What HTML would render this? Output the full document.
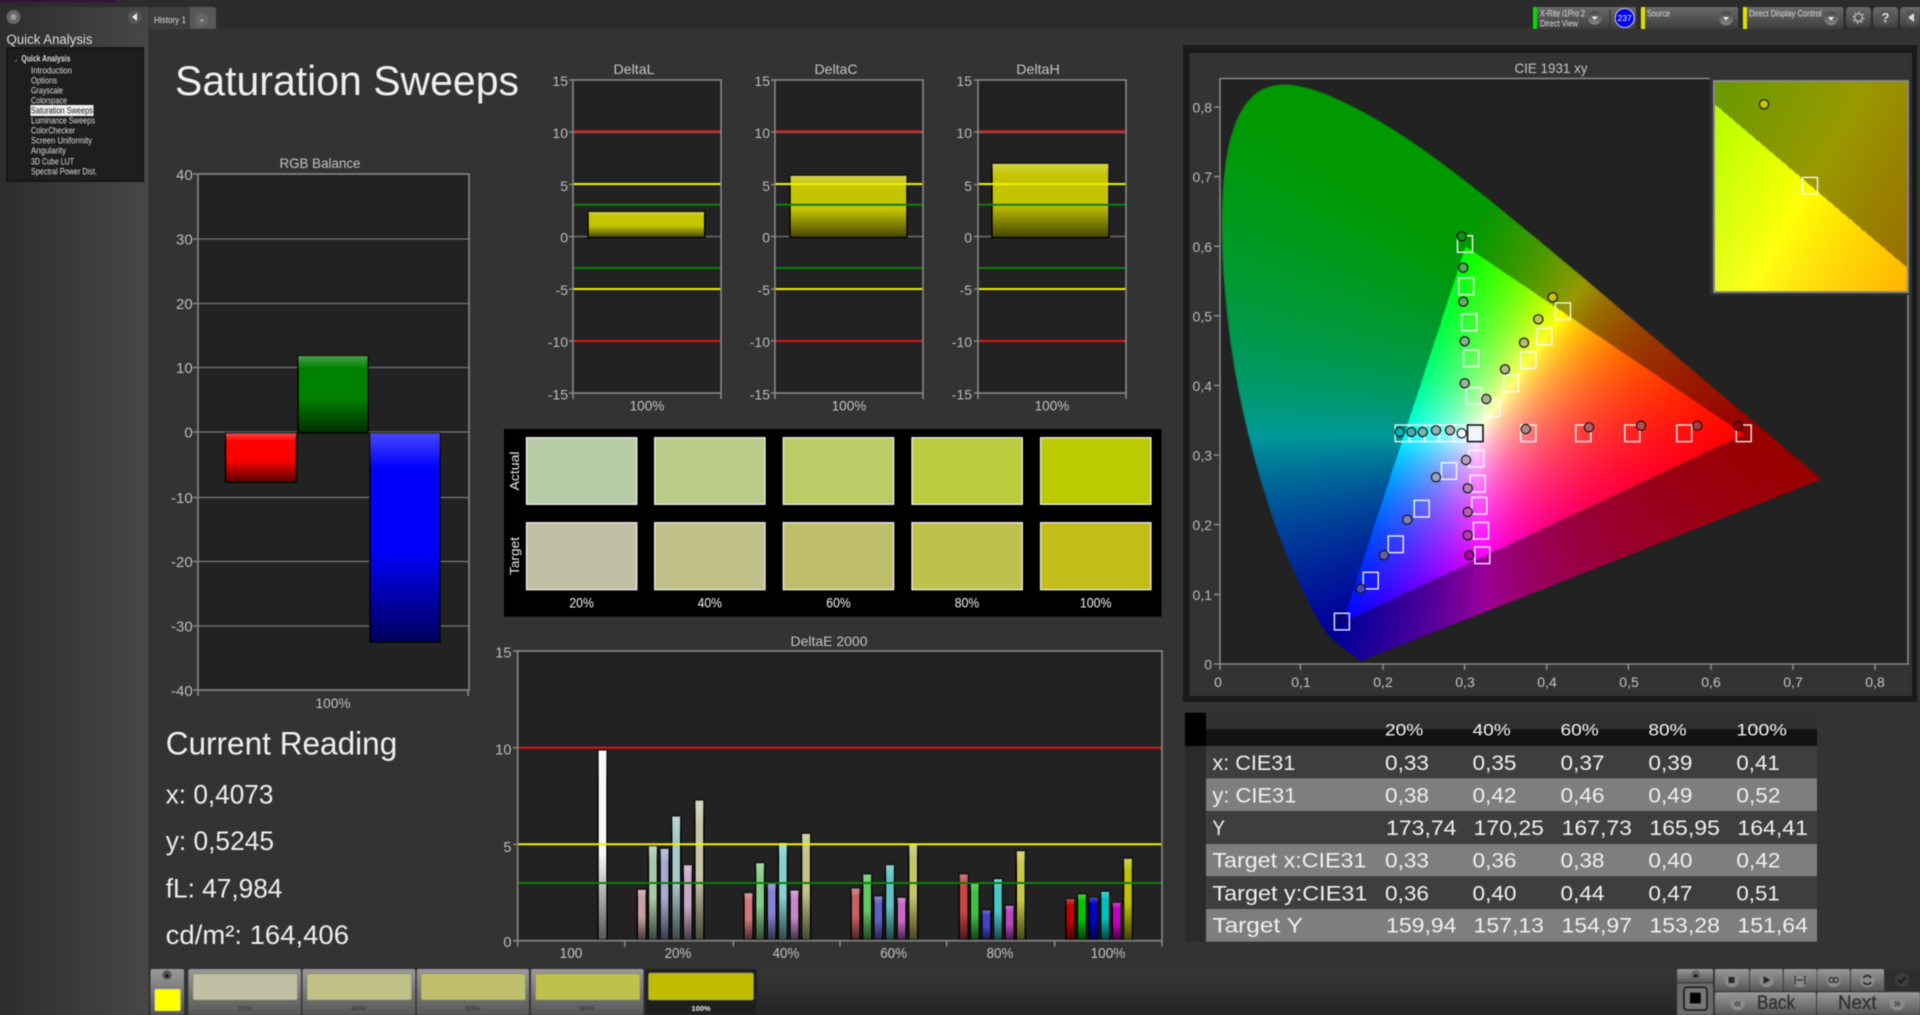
<!DOCTYPE html>
<html lang="en"><head><meta charset="utf-8"><title>Saturation Sweeps</title>
<style>
html,body{margin:0;padding:0;background:#333;width:1920px;height:1015px;overflow:hidden}
#wrap{position:absolute;left:0;top:0;width:1920px;height:1015px;filter:blur(.4px)}
svg,canvas{position:absolute;display:block}
text{font-family:"Liberation Sans",sans-serif}
.l{font-size:14px;fill:#bbb;text-anchor:end}
.c{font-size:14px;fill:#c4c4c4;text-anchor:middle}
.t{font-size:9.5px;fill:#ddd}
.v{font-size:21px;fill:#f0f0f0}
.h{font-size:16.5px;fill:#f4f4f4}
.r{font-size:26.5px;fill:#eee}
.s{font-size:14px;fill:#f4f4f4;text-anchor:middle}
.b{font-size:7.5px;fill:#333;text-anchor:middle}
.g{stroke:#777;stroke-width:1.2}
.a{stroke:#888;stroke-width:1.6;fill:none}
.re{stroke:#e01818;stroke-width:2}
.ye{stroke:#f0f000;stroke-width:2}
.gr{stroke:#0a800a;stroke-width:2}
.k{stroke:#000;stroke-width:1.4}
.o{fill:url(#ov)}
.w{fill:#eee;stroke:none}
.q{fill:none;stroke:#fff;stroke-width:1.4;stroke-opacity:.92}
.p{stroke:#111;stroke-width:1.2}
</style></head><body>
<div id="wrap">
<svg width="1920" height="1015" viewBox="0 0 1920 1015" style="left:0;top:0">
<defs>
<linearGradient id="side" x1="0" x2="1" y1="0" y2="0"><stop offset="0" stop-color="#2d2d2d"/><stop offset="1" stop-color="#474747"/></linearGradient>
<linearGradient id="btn" x1="0" x2="0" y1="0" y2="1"><stop offset="0" stop-color="#6a6a6a"/><stop offset="1" stop-color="#3e3e3e"/></linearGradient>
<linearGradient id="btn2" x1="0" x2="0" y1="0" y2="1"><stop offset="0" stop-color="#9a9a9a"/><stop offset="1" stop-color="#565656"/></linearGradient>
<linearGradient id="dark" x1="0" x2="0" y1="0" y2="1"><stop offset="0" stop-color="#444"/><stop offset="1" stop-color="#888"/></linearGradient>
<linearGradient id="strip" x1="0" x2="0" y1="0" y2="1"><stop offset="0" stop-color="#363636"/><stop offset="1" stop-color="#262626"/></linearGradient>
<linearGradient id="ov" x1="0" x2="0" y1="0" y2="1"><stop offset="0" stop-color="#fff" stop-opacity=".28"/><stop offset=".17" stop-color="#fff" stop-opacity="0"/><stop offset=".55" stop-color="#000" stop-opacity="0"/><stop offset="1" stop-color="#000" stop-opacity=".65"/></linearGradient>
</defs>

<rect width="1920" height="1015" fill="#333"/>
<rect width="1920" height="29" fill="#2c2c2c"/>
<rect x="0" y="7" width="149" height="1008" fill="url(#side)"/>
<rect x="0" y="0" width="117" height="2" fill="#3a0a40"/>
<rect x="148.5" y="7" width="1" height="1008" fill="#2e2e2e"/>

<!-- sidebar -->
<circle cx="13.5" cy="17" r="7" fill="#666"/><circle cx="13.5" cy="17" r="3" fill="#999"/>
<circle cx="135" cy="17" r="7" fill="#555"/><polygon points="132,17 137,13 137,21" fill="#eee"/>
<text x="6.5" y="44" font-size="13.5" fill="#ddd" textLength="86" lengthAdjust="spacingAndGlyphs">Quick Analysis</text>
<rect x="7" y="48" width="136" height="133" fill="#1e1e1e" stroke="#161616" stroke-width="2"/>
<polygon points="14,62 17,59 17,62" fill="#555"/>
<text class="t" x="21.4" y="61.5" font-weight="bold" fill="#eee" textLength="49" lengthAdjust="spacingAndGlyphs">Quick Analysis</text>
<text class="t" x="31" y="73.5" textLength="41" lengthAdjust="spacingAndGlyphs">Introduction</text>
<text class="t" x="31" y="83.5" textLength="26" lengthAdjust="spacingAndGlyphs">Options</text>
<text class="t" x="31" y="93.5" textLength="32" lengthAdjust="spacingAndGlyphs">Grayscale</text>
<text class="t" x="31" y="103.5" textLength="36" lengthAdjust="spacingAndGlyphs">Colorspace</text>
<rect x="30.5" y="105" width="63" height="11" fill="#eee"/>
<text class="t" x="31" y="113.5" style="fill:#222" textLength="62" lengthAdjust="spacingAndGlyphs">Saturation Sweeps</text>
<text class="t" x="31" y="123.5" textLength="64" lengthAdjust="spacingAndGlyphs">Luminance Sweeps</text>
<text class="t" x="31" y="133.5" textLength="44" lengthAdjust="spacingAndGlyphs">ColorChecker</text>
<text class="t" x="31" y="143.5" textLength="61" lengthAdjust="spacingAndGlyphs">Screen Uniformity</text>
<text class="t" x="31" y="153.5" textLength="35" lengthAdjust="spacingAndGlyphs">Angularity</text>
<text class="t" x="31" y="164.5" textLength="43" lengthAdjust="spacingAndGlyphs">3D Cube LUT</text>
<text class="t" x="31" y="174.5" textLength="66" lengthAdjust="spacingAndGlyphs">Spectral Power Dist.</text>

<!-- tabs -->
<path d="M149 29V10q0-3 3-3h38v22z" fill="#3e3e3e"/>
<path d="M190 7h23q3 0 3 3v19h-26z" fill="#585858"/>
<circle cx="202" cy="20" r="6.5" fill="#666"/>
<text x="202" y="23" font-size="8" fill="#ccc" text-anchor="middle">+</text>
<text x="154" y="23" font-size="9.5" fill="#ddd" textLength="32" lengthAdjust="spacingAndGlyphs">History 1</text>

<!-- top right controls -->
<rect x="1533" y="7" width="103" height="22" rx="2" fill="url(#btn)"/><rect x="1533" y="7" width="4" height="22" fill="#00dd00"/>
<line x1="1610" y1="9" x2="1610" y2="29" stroke="#333"/>
<text class="t" x="1540" y="16.5" textLength="45" lengthAdjust="spacingAndGlyphs">X-Rite i1Pro 2</text>
<text class="t" x="1540" y="26.5" textLength="38" lengthAdjust="spacingAndGlyphs">Direct View</text>
<circle cx="1594.7" cy="17.7" r="7" fill="url(#dark)"/><polygon points="1591.5,16.5 1598,16.5 1594.7,20" fill="#eee"/>
<circle cx="1624.7" cy="18" r="9.5" fill="#0000ee" stroke="#ccd" stroke-width="1"/>
<text x="1624.7" y="21" font-size="8.5" fill="#eef" text-anchor="middle">237</text>
<rect x="1640.7" y="7" width="97.3" height="22" rx="2" fill="url(#btn)"/><rect x="1641" y="7" width="4" height="22" fill="#e0e000"/>
<text class="t" x="1647" y="16.5" textLength="23" lengthAdjust="spacingAndGlyphs">Source</text>
<circle cx="1726" cy="18.3" r="7" fill="url(#dark)"/><polygon points="1722.8,17 1729.2,17 1726,20.5" fill="#eee"/>
<rect x="1742.7" y="7" width="100.6" height="22" rx="2" fill="url(#btn)"/><rect x="1743" y="7" width="4" height="22" fill="#e0e000"/>
<text class="t" x="1749" y="16.5" textLength="72.7" lengthAdjust="spacingAndGlyphs">Direct Display Control</text>
<circle cx="1831" cy="18.3" r="7" fill="url(#dark)"/><polygon points="1827.8,17 1834.2,17 1831,20.5" fill="#eee"/>
<rect x="1846" y="7" width="25" height="21" rx="4" fill="url(#btn)"/>
<circle cx="1858.5" cy="17.5" r="7.5" fill="#555"/><circle cx="1858.5" cy="17.5" r="3.8" fill="none" stroke="#aaa" stroke-width="1.6"/><circle cx="1858.5" cy="17.5" r="5.4" fill="none" stroke="#aaa" stroke-width="1.4" stroke-dasharray="2 2.2"/>
<rect x="1873" y="7" width="25" height="21" rx="4" fill="url(#btn)"/>
<circle cx="1885.5" cy="17.5" r="7.5" fill="#555"/><text x="1885.5" y="22" font-size="13" font-weight="bold" fill="#ddd" text-anchor="middle">?</text>
<rect x="1900" y="7" width="24" height="21" rx="4" fill="url(#btn)"/>
<circle cx="1912" cy="17.5" r="7.5" fill="#555"/><polygon points="1908,17.5 1914,13 1914,22" fill="#ddd"/>

<!-- title -->
<text x="175" y="95" font-size="42" fill="#eee" textLength="344" lengthAdjust="spacingAndGlyphs">Saturation Sweeps</text>

<!-- RGB balance -->
<text class="c" x="320" y="168" textLength="81" lengthAdjust="spacingAndGlyphs">RGB Balance</text>
<rect x="198" y="174" width="271" height="516" fill="#222"/>
<g class="g"><line x1="198" x2="469" y1="239" y2="239"/><line x1="198" x2="469" y1="303.5" y2="303.5"/><line x1="198" x2="469" y1="367.5" y2="367.5"/><line x1="198" x2="469" y1="432" y2="432"/><line x1="198" x2="469" y1="497.5" y2="497.5"/><line x1="198" x2="469" y1="561.5" y2="561.5"/><line x1="198" x2="469" y1="626" y2="626"/></g>
<rect class="a" x="198" y="174" width="271" height="516"/>
<path class="a" d="M193 174h5M193 239h5M193 303.5h5M193 367.5h5M193 432h5M193 497.5h5M193 561.5h5M193 626h5M193 690h5M198 690v6M468 690v6"/>
<g class="l" style="font-size:15px"><text x="192.7" y="180">40</text><text x="192.7" y="244.5">30</text><text x="192.7" y="309">20</text><text x="192.7" y="373">10</text><text x="192.7" y="437.5">0</text><text x="192.7" y="503">-10</text><text x="192.7" y="567">-20</text><text x="192.7" y="631.5">-30</text><text x="192.7" y="696">-40</text></g>
<rect class="k" x="225.5" y="433" width="71" height="49" fill="#f00"/><rect class="o" x="225.5" y="433" width="71" height="49"/>
<rect class="k" x="298" y="355.7" width="70" height="77.3" fill="#008000"/><rect class="o" x="298" y="355.7" width="70" height="77.3"/>
<rect class="k" x="370" y="433" width="70" height="209" fill="#0000ff"/><rect class="o" x="370" y="433" width="70" height="209"/>
<text class="c" x="333" y="708" textLength="35" lengthAdjust="spacingAndGlyphs">100%</text>

<!-- Delta charts -->
<text class="c" x="634" y="74" textLength="41" lengthAdjust="spacingAndGlyphs">DeltaL</text>
<text class="c" x="836" y="74" textLength="43" lengthAdjust="spacingAndGlyphs">DeltaC</text>
<text class="c" x="1038" y="74" textLength="43.4" lengthAdjust="spacingAndGlyphs">DeltaH</text>
<g fill="#222"><rect x="573" y="80" width="148" height="313"/><rect x="775" y="80" width="148" height="313"/><rect x="978" y="80" width="148" height="313"/></g>
<g class="g"><path d="M573 132.5h148M573 184.5h148M573 236.5h148M573 289h148M573 341h148M775 132.5h148M775 184.5h148M775 236.5h148M775 289h148M775 341h148M978 132.5h148M978 184.5h148M978 236.5h148M978 289h148M978 341h148" fill="none"/></g>
<rect class="k" x="588" y="211.5" width="116.7" height="26" fill="#c4c400"/><rect class="o" x="588" y="211.5" width="116.7" height="26"/>
<rect class="k" x="790" y="175.3" width="117" height="62.2" fill="#c4c400"/><rect class="o" x="790" y="175.3" width="117" height="62.2"/>
<rect class="k" x="992" y="163.3" width="117" height="74.2" fill="#c4c400"/><rect class="o" x="992" y="163.3" width="117" height="74.2"/>
<path class="re" d="M573 131.3h148M775 131.3h148M978 131.3h148M573 341h148M775 341h148M978 341h148"/>
<path class="ye" d="M573 184h148M775 184h148M978 184h148M573 289h148M775 289h148M978 289h148"/>
<path class="gr" d="M573 204.7h148M775 204.7h148M978 204.7h148M573 268h148M775 268h148M978 268h148"/>
<g class="a"><rect x="573" y="80" width="148" height="313"/><rect x="775" y="80" width="148" height="313"/><rect x="978" y="80" width="148" height="313"/>
<path d="M569 80h4M569 132h4M569 184.5h4M569 236.5h4M569 289h4M569 341h4M569 393h4M573 393v6M721 393v6M771 80h4M771 132h4M771 184.5h4M771 236.5h4M771 289h4M771 341h4M771 393h4M775 393v6M923 393v6M974 80h4M974 132h4M974 184.5h4M974 236.5h4M974 289h4M974 341h4M974 393h4M978 393v6M1126 393v6"/></g>
<g class="l"><text x="568" y="86">15</text><text x="568" y="138">10</text><text x="568" y="191">5</text><text x="568" y="242.5">0</text><text x="568" y="295">-5</text><text x="568" y="347">-10</text><text x="568" y="399.5">-15</text>
<text x="770" y="86">15</text><text x="770" y="138">10</text><text x="770" y="191">5</text><text x="770" y="242.5">0</text><text x="770" y="295">-5</text><text x="770" y="347">-10</text><text x="770" y="399.5">-15</text>
<text x="972" y="86">15</text><text x="972" y="138">10</text><text x="972" y="191">5</text><text x="972" y="242.5">0</text><text x="972" y="295">-5</text><text x="972" y="347">-10</text><text x="972" y="399.5">-15</text></g>
<text class="c" x="647" y="410.5" textLength="34.7" lengthAdjust="spacingAndGlyphs">100%</text>
<text class="c" x="849" y="410.5" textLength="34.7" lengthAdjust="spacingAndGlyphs">100%</text>
<text class="c" x="1052" y="410.5" textLength="34.7" lengthAdjust="spacingAndGlyphs">100%</text>

<!-- swatch panel -->
<rect x="504" y="429" width="657.5" height="187.7" fill="#000"/>
<g stroke="#eee" stroke-width="1.3">
<rect x="526.5" y="437.7" width="110.3" height="66.6" fill="#b9cca8"/><rect x="654.7" y="437.7" width="110.3" height="66.6" fill="#bbcc88"/><rect x="783.3" y="437.7" width="110.3" height="66.6" fill="#bbcc66"/><rect x="912" y="437.7" width="110.3" height="66.6" fill="#bbcc3f"/><rect x="1040.6" y="437.7" width="110.3" height="66.6" fill="#bccb00"/>
<rect x="526.5" y="522.7" width="110.3" height="67" fill="#c0c0a4"/><rect x="654.7" y="522.7" width="110.3" height="67" fill="#c0c088"/><rect x="783.3" y="522.7" width="110.3" height="67" fill="#bfbf6b"/><rect x="912" y="522.7" width="110.3" height="67" fill="#c0c04c"/><rect x="1040.6" y="522.7" width="110.3" height="67" fill="#c3bd1a"/></g>
<text transform="translate(519,471) rotate(-90)" font-size="13" fill="#eee" text-anchor="middle" textLength="39" lengthAdjust="spacingAndGlyphs">Actual</text>
<text transform="translate(519,556) rotate(-90)" font-size="13" fill="#eee" text-anchor="middle" textLength="38" lengthAdjust="spacingAndGlyphs">Target</text>
<text class="s" x="581.6" y="607.5" textLength="24.4" lengthAdjust="spacingAndGlyphs">20%</text><text class="s" x="709.8" y="607.5" textLength="24.4" lengthAdjust="spacingAndGlyphs">40%</text><text class="s" x="838.5" y="607.5" textLength="24.4" lengthAdjust="spacingAndGlyphs">60%</text><text class="s" x="967" y="607.5" textLength="24.4" lengthAdjust="spacingAndGlyphs">80%</text><text class="s" x="1095.7" y="607.5" textLength="31.6" lengthAdjust="spacingAndGlyphs">100%</text>

<!-- DeltaE -->
<text class="c" x="829" y="646" textLength="77" lengthAdjust="spacingAndGlyphs">DeltaE 2000</text>
<rect x="517.7" y="651" width="644.3" height="289.7" fill="#222"/>
<g class="k">
<rect x="598" y="750" width="9" height="190" fill="#f8f8f8"/>
<rect x="637.3" y="889.3" width="9" height="50.7" fill="#c8a0a0"/><rect x="648.4" y="845.7" width="9" height="94.3" fill="#a8c8a8"/><rect x="660.1" y="848.3" width="9" height="91.7" fill="#a8a8d0"/><rect x="671.7" y="816" width="9" height="124" fill="#a8c8c8"/><rect x="683.3" y="864.7" width="9" height="75.3" fill="#c8a8c8"/><rect x="694.9" y="800" width="9" height="140" fill="#c8c8a8"/>
<rect x="744" y="892.7" width="9" height="47.3" fill="#d07878"/><rect x="755.6" y="862.7" width="9" height="77.3" fill="#88cc88"/><rect x="767.2" y="882" width="9" height="58" fill="#8484d0"/><rect x="778.4" y="842.3" width="9" height="97.7" fill="#88d0d0"/><rect x="790" y="890" width="9" height="50" fill="#c888c8"/><rect x="801.6" y="833.3" width="9" height="106.7" fill="#c4c488"/>
<rect x="851.1" y="888" width="9" height="52" fill="#c86060"/><rect x="862.7" y="874" width="9" height="66" fill="#60c860"/><rect x="873.9" y="896" width="9" height="44" fill="#6060c4"/><rect x="885.5" y="864.7" width="9" height="75.3" fill="#60c4c4"/><rect x="897.1" y="897.3" width="9" height="42.7" fill="#c868c8"/><rect x="908.7" y="842.7" width="9" height="97.3" fill="#c4c468"/>
<rect x="959.2" y="874" width="9" height="66" fill="#cc4444"/><rect x="970.3" y="882" width="9" height="58" fill="#40c040"/><rect x="981.9" y="910" width="9" height="30" fill="#4444c8"/><rect x="993.5" y="878.7" width="9" height="61.3" fill="#44c8c8"/><rect x="1005.1" y="905.3" width="9" height="34.7" fill="#c044c0"/><rect x="1016.3" y="850.7" width="9" height="89.3" fill="#c8c844"/>
<rect x="1065.9" y="898.7" width="9" height="41.3" fill="#c00000"/><rect x="1077.5" y="894" width="9" height="46" fill="#00c000"/><rect x="1089.1" y="897.3" width="9" height="42.7" fill="#0000c0"/><rect x="1100.7" y="891.3" width="9" height="48.7" fill="#00c0c0"/><rect x="1112.3" y="902.3" width="9" height="37.7" fill="#c000c0"/><rect x="1123.5" y="858.3" width="9" height="81.7" fill="#c0c000"/>
</g>
<g class="o">
<rect x="598" y="750" width="9" height="190"/>
<rect x="637.3" y="889.3" width="9" height="50.7"/><rect x="648.4" y="845.7" width="9" height="94.3"/><rect x="660.1" y="848.3" width="9" height="91.7"/><rect x="671.7" y="816" width="9" height="124"/><rect x="683.3" y="864.7" width="9" height="75.3"/><rect x="694.9" y="800" width="9" height="140"/>
<rect x="744" y="892.7" width="9" height="47.3"/><rect x="755.6" y="862.7" width="9" height="77.3"/><rect x="767.2" y="882" width="9" height="58"/><rect x="778.4" y="842.3" width="9" height="97.7"/><rect x="790" y="890" width="9" height="50"/><rect x="801.6" y="833.3" width="9" height="106.7"/>
<rect x="851.1" y="888" width="9" height="52"/><rect x="862.7" y="874" width="9" height="66"/><rect x="873.9" y="896" width="9" height="44"/><rect x="885.5" y="864.7" width="9" height="75.3"/><rect x="897.1" y="897.3" width="9" height="42.7"/><rect x="908.7" y="842.7" width="9" height="97.3"/>
<rect x="959.2" y="874" width="9" height="66"/><rect x="970.3" y="882" width="9" height="58"/><rect x="981.9" y="910" width="9" height="30"/><rect x="993.5" y="878.7" width="9" height="61.3"/><rect x="1005.1" y="905.3" width="9" height="34.7"/><rect x="1016.3" y="850.7" width="9" height="89.3"/>
<rect x="1065.9" y="898.7" width="9" height="41.3"/><rect x="1077.5" y="894" width="9" height="46"/><rect x="1089.1" y="897.3" width="9" height="42.7"/><rect x="1100.7" y="891.3" width="9" height="48.7"/><rect x="1112.3" y="902.3" width="9" height="37.7"/><rect x="1123.5" y="858.3" width="9" height="81.7"/>
</g>
<path class="re" d="M517.7 747.7H1162"/><path class="ye" d="M517.7 844.3H1162"/><path class="gr" d="M517.7 883H1162"/>
<rect class="a" x="517.7" y="651" width="644.3" height="289.7"/>
<path class="a" d="M513 651h5M513 747.7h5M513 844.3h5M513 940.7h5M517.7 940.7v6M624.8 940.7v6M733.3 940.7v6M840 940.7v6M946.7 940.7v6M1054.7 940.7v6M1162 940.7v6"/>
<g class="l" style="font-size:14.5px"><text x="511.4" y="657.5">15</text><text x="511.4" y="754.5">10</text><text x="511.4" y="852">5</text><text x="511.4" y="947">0</text></g>
<g class="c" style="font-size:14.5px"><text x="571" y="958" textLength="22.8" lengthAdjust="spacingAndGlyphs">100</text><text x="678" y="958" textLength="26.8" lengthAdjust="spacingAndGlyphs">20%</text><text x="786" y="958" textLength="26.8" lengthAdjust="spacingAndGlyphs">40%</text><text x="893.6" y="958" textLength="26.8" lengthAdjust="spacingAndGlyphs">60%</text><text x="1000" y="958" textLength="26.8" lengthAdjust="spacingAndGlyphs">80%</text><text x="1108" y="958" textLength="34.8" lengthAdjust="spacingAndGlyphs">100%</text></g>

<!-- current reading -->
<text x="165.7" y="754.3" font-size="32" fill="#eee" textLength="231.6" lengthAdjust="spacingAndGlyphs">Current Reading</text>
<text class="r" x="165.7" y="803.3" textLength="107.7" lengthAdjust="spacingAndGlyphs">x: 0,4073</text>
<text class="r" x="165.7" y="850" textLength="108.3" lengthAdjust="spacingAndGlyphs">y: 0,5245</text>
<text class="r" x="165.7" y="897.3" textLength="116.7" lengthAdjust="spacingAndGlyphs">fL: 47,984</text>
<text class="r" x="165.7" y="944" textLength="183.3" lengthAdjust="spacingAndGlyphs">cd/m²: 164,406</text>

<!-- CIE frame -->
<rect x="1183" y="45" width="734" height="657" fill="#1a1a1a"/>
<rect x="1189.4" y="53" width="722.6" height="643" fill="#333"/>
<text class="c" x="1551" y="73" textLength="73" lengthAdjust="spacingAndGlyphs">CIE 1931 xy</text>
<rect x="1220" y="78.5" width="688" height="585.5" fill="#222"/>
<path class="a" d="M1710 78.5H1220V664H1908V294M1214 107h6M1214 176.6h6M1214 246.2h6M1214 315.8h6M1214 385.4h6M1214 455h6M1214 524.6h6M1214 594.4h6M1214 664h6M1220 664v6M1300.3 664v6M1383 664v6M1464.6 664v6M1546.7 664v6M1628.3 664v6M1711 664v6M1793 664v6M1875 664v6"/>
<g class="l"><text x="1212" y="112.5">0,8</text><text x="1212" y="182">0,7</text><text x="1212" y="252">0,6</text><text x="1212" y="321.5">0,5</text><text x="1212" y="391">0,4</text><text x="1212" y="460.5">0,3</text><text x="1212" y="530">0,2</text><text x="1212" y="600">0,1</text><text x="1212" y="669.5">0</text></g>
<g class="c"><text x="1218" y="687">0</text><text x="1301" y="687">0,1</text><text x="1383" y="687">0,2</text><text x="1465" y="687">0,3</text><text x="1547" y="687">0,4</text><text x="1629" y="687">0,5</text><text x="1711" y="687">0,6</text><text x="1793" y="687">0,7</text><text x="1875" y="687">0,8</text></g>
<rect x="1710" y="78" width="202" height="217" fill="#333"/>

<!-- table -->
<rect x="1185" y="712.7" width="632" height="33.3" fill="#2f2f2f"/>
<rect x="1206" y="729.3" width="611" height="16.7" fill="#111"/>
<rect x="1185" y="712.7" width="21" height="33.3" fill="#000"/>
<rect x="1185" y="746" width="21" height="195.7" fill="#2a2a2a"/>
<rect x="1206" y="746" width="611" height="32.3" fill="#3e3e3e"/><rect x="1206" y="778.3" width="611" height="32.7" fill="#7e7e7e"/><rect x="1206" y="811" width="611" height="33" fill="#3e3e3e"/><rect x="1206" y="844" width="611" height="32.3" fill="#7e7e7e"/><rect x="1206" y="876.3" width="611" height="32.7" fill="#3e3e3e"/><rect x="1206" y="909" width="611" height="32.7" fill="#7e7e7e"/>
<g>
<text class="h" x="1385" y="735.7" textLength="38.3" lengthAdjust="spacingAndGlyphs">20%</text><text class="h" x="1472.5" y="735.7" textLength="38.3" lengthAdjust="spacingAndGlyphs">40%</text><text class="h" x="1560.5" y="735.7" textLength="38.3" lengthAdjust="spacingAndGlyphs">60%</text><text class="h" x="1648.4" y="735.7" textLength="38.3" lengthAdjust="spacingAndGlyphs">80%</text><text class="h" x="1736.4" y="735.7" textLength="50.5" lengthAdjust="spacingAndGlyphs">100%</text>
<text class="v" x="1212.4" y="770" textLength="83" lengthAdjust="spacingAndGlyphs">x: CIE31</text><text class="v" x="1385" y="770" textLength="44" lengthAdjust="spacingAndGlyphs">0,33</text><text class="v" x="1472.5" y="770" textLength="44" lengthAdjust="spacingAndGlyphs">0,35</text><text class="v" x="1560.5" y="770" textLength="44" lengthAdjust="spacingAndGlyphs">0,37</text><text class="v" x="1648.4" y="770" textLength="44" lengthAdjust="spacingAndGlyphs">0,39</text><text class="v" x="1736.4" y="770" textLength="43.3" lengthAdjust="spacingAndGlyphs">0,41</text>
<text class="v" x="1212.4" y="802.3" textLength="84" lengthAdjust="spacingAndGlyphs">y: CIE31</text><text class="v" x="1385" y="802.3" textLength="44" lengthAdjust="spacingAndGlyphs">0,38</text><text class="v" x="1472.5" y="802.3" textLength="44" lengthAdjust="spacingAndGlyphs">0,42</text><text class="v" x="1560.5" y="802.3" textLength="44" lengthAdjust="spacingAndGlyphs">0,46</text><text class="v" x="1648.4" y="802.3" textLength="44" lengthAdjust="spacingAndGlyphs">0,49</text><text class="v" x="1736.4" y="802.3" textLength="44" lengthAdjust="spacingAndGlyphs">0,52</text>
<text class="v" x="1212.4" y="835" textLength="12.6" lengthAdjust="spacingAndGlyphs">Y</text><text class="v" x="1386" y="835" textLength="70.5" lengthAdjust="spacingAndGlyphs">173,74</text><text class="v" x="1473.5" y="835" textLength="70.5" lengthAdjust="spacingAndGlyphs">170,25</text><text class="v" x="1561.5" y="835" textLength="70.5" lengthAdjust="spacingAndGlyphs">167,73</text><text class="v" x="1649.4" y="835" textLength="70.5" lengthAdjust="spacingAndGlyphs">165,95</text><text class="v" x="1737.4" y="835" textLength="70.5" lengthAdjust="spacingAndGlyphs">164,41</text>
<text class="v" x="1212.4" y="867.7" textLength="154" lengthAdjust="spacingAndGlyphs">Target x:CIE31</text><text class="v" x="1385" y="867.7" textLength="44" lengthAdjust="spacingAndGlyphs">0,33</text><text class="v" x="1472.5" y="867.7" textLength="44" lengthAdjust="spacingAndGlyphs">0,36</text><text class="v" x="1560.5" y="867.7" textLength="44" lengthAdjust="spacingAndGlyphs">0,38</text><text class="v" x="1648.4" y="867.7" textLength="44" lengthAdjust="spacingAndGlyphs">0,40</text><text class="v" x="1736.4" y="867.7" textLength="44" lengthAdjust="spacingAndGlyphs">0,42</text>
<text class="v" x="1212.4" y="900.3" textLength="155" lengthAdjust="spacingAndGlyphs">Target y:CIE31</text><text class="v" x="1385" y="900.3" textLength="44" lengthAdjust="spacingAndGlyphs">0,36</text><text class="v" x="1472.5" y="900.3" textLength="44" lengthAdjust="spacingAndGlyphs">0,40</text><text class="v" x="1560.5" y="900.3" textLength="44" lengthAdjust="spacingAndGlyphs">0,44</text><text class="v" x="1648.4" y="900.3" textLength="44" lengthAdjust="spacingAndGlyphs">0,47</text><text class="v" x="1736.4" y="900.3" textLength="43.3" lengthAdjust="spacingAndGlyphs">0,51</text>
<text class="v" x="1212.4" y="932.7" textLength="90.5" lengthAdjust="spacingAndGlyphs">Target Y</text><text class="v" x="1386" y="932.7" textLength="70.5" lengthAdjust="spacingAndGlyphs">159,94</text><text class="v" x="1473.5" y="932.7" textLength="70.5" lengthAdjust="spacingAndGlyphs">157,13</text><text class="v" x="1561.5" y="932.7" textLength="70.5" lengthAdjust="spacingAndGlyphs">154,97</text><text class="v" x="1649.4" y="932.7" textLength="70.5" lengthAdjust="spacingAndGlyphs">153,28</text><text class="v" x="1737.4" y="932.7" textLength="70.5" lengthAdjust="spacingAndGlyphs">151,64</text>
</g>

<!-- bottom strip -->
<rect x="757" y="969" width="920" height="46" fill="url(#strip)"/>
<rect x="150.5" y="969" width="33.5" height="46" rx="2" fill="url(#btn2)"/>
<circle cx="167" cy="975" r="4.6" fill="#555"/><polygon points="164.5,977 169.5,977 167,973.5" fill="#111"/>
<rect x="154.6" y="989" width="26" height="22" rx="2" fill="#ffff00" stroke="#aaa" stroke-width=".8"/>
<g fill="url(#btn2)"><rect x="188.3" y="969" width="112.7" height="46" rx="2"/><rect x="302.5" y="969" width="112.8" height="46" rx="2"/><rect x="416.8" y="969" width="112.2" height="46" rx="2"/><rect x="531" y="969" width="112.4" height="46" rx="2"/></g>
<rect x="645" y="969" width="112" height="46" fill="#1f1f1f" rx="2"/>
<g stroke="#8e8e70" stroke-width=".8"><rect x="193" y="973.7" width="104.5" height="26.3" rx="2" fill="#c0c0a4"/><rect x="307" y="973.7" width="104.5" height="26.3" rx="2" fill="#c0c088"/><rect x="421" y="973.7" width="104.5" height="26.3" rx="2" fill="#bfbf6b"/><rect x="535.5" y="973.7" width="104.5" height="26.3" rx="2" fill="#c0c04c"/><rect x="648.5" y="973" width="105" height="27" rx="2" fill="#c2bc00"/></g>
<text class="b" x="245" y="1011">20%</text><text class="b" x="358.7" y="1011">40%</text><text class="b" x="472.6" y="1011">60%</text><text class="b" x="587" y="1011">80%</text><text class="b" x="701" y="1011" font-weight="bold" style="fill:#eee">100%</text>

<!-- bottom right controls -->
<rect x="1677" y="969" width="243" height="46" fill="#3a3a3a"/>
<rect x="1677" y="969" width="36" height="13.5" rx="2" fill="url(#btn2)"/>
<circle cx="1695.7" cy="975" r="4.6" fill="#666"/><polygon points="1693,977 1698.5,977 1695.7,973.5" fill="#111"/>
<rect x="1677" y="983.5" width="36" height="31.5" rx="2" fill="#6a6a6a"/>
<rect x="1684" y="987.3" width="23" height="22.7" rx="3" fill="#777" stroke="#1a1a1a" stroke-width="1.6"/>
<rect x="1690" y="992.7" width="10.7" height="10.7" fill="#000"/>
<g fill="url(#btn2)"><rect x="1715" y="969" width="34" height="22" rx="2"/><rect x="1750" y="969" width="32.7" height="22" rx="2"/><rect x="1783.7" y="969" width="33" height="22" rx="2"/><rect x="1817.3" y="969" width="32.7" height="22" rx="2"/><rect x="1851" y="969" width="33" height="22" rx="2"/>
<rect x="1715" y="992.3" width="101" height="23" rx="2"/><rect x="1817" y="992.3" width="103" height="23" rx="2"/></g>
<rect x="1885" y="969" width="35" height="22" fill="#2e2e2e"/>
<g fill="#8a8a8a"><circle cx="1731.7" cy="980" r="7.3"/><circle cx="1766.7" cy="980" r="7.3"/><circle cx="1800" cy="980" r="7.3"/><circle cx="1833.7" cy="980" r="7.3"/><circle cx="1867.3" cy="980" r="7.3"/><circle cx="1737.7" cy="1003" r="7.5"/><circle cx="1897.3" cy="1003" r="7.5"/></g>
<circle cx="1901.7" cy="980" r="7.3" fill="#3a3a3a"/>
<rect x="1728.5" y="977" width="6" height="6" fill="#2a2a2a"/>
<polygon points="1763.5,976 1770.5,980 1763.5,984" fill="#2a2a2a"/>
<path d="M1796 976.5h-1v7h1M1804 976.5h1v7h-1M1797 980h6" fill="none" stroke="#2a2a2a" stroke-width="1.2"/>
<circle cx="1831.3" cy="980" r="2.4" fill="none" stroke="#2a2a2a" stroke-width="1.2"/><circle cx="1836" cy="980" r="2.4" fill="none" stroke="#2a2a2a" stroke-width="1.2"/>
<path d="M1863.5 978a4.2 4.2 0 0 1 7.6 0M1871.1 982a4.2 4.2 0 0 1-7.6 0" fill="none" stroke="#2a2a2a" stroke-width="1.7"/>
<path d="M1898.5 980l2.3 2.5 4.2-5" fill="none" stroke="#151515" stroke-width="1.7"/>
<text x="1737.7" y="1007.5" font-size="13" font-weight="bold" fill="#444" text-anchor="middle">«</text>
<text x="1897.3" y="1007.5" font-size="13" font-weight="bold" fill="#444" text-anchor="middle">»</text>
<text x="1757" y="1009" font-size="19" fill="#333" stroke="#333" stroke-width=".4" textLength="38" lengthAdjust="spacingAndGlyphs">Back</text>
<text x="1838" y="1009" font-size="19" fill="#333" stroke="#333" stroke-width=".4" textLength="38.5" lengthAdjust="spacingAndGlyphs">Next</text>
</svg>

<canvas id="cie" width="620" height="592" style="left:1220px;top:78px"></canvas>
<canvas id="ins" width="194" height="211" style="left:1714px;top:81px"></canvas>

<svg width="1920" height="1015" viewBox="0 0 1920 1015" style="left:0;top:0">
<defs><rect id="s" class="q" x="-7.5" y="-8.3" width="15" height="16.6"/></defs>
<rect x="1714" y="81" width="194" height="211" fill="none" stroke="#888" stroke-width="2"/>
<use href="#s" x="1810" y="185.7"/>
<circle class="p" cx="1764" cy="104.3" r="4.6" fill="#c8c400"/>
<g>
<use href="#s" x="1465" y="244"/><use href="#s" x="1466.3" y="286.3"/><use href="#s" x="1469.3" y="322.3"/><use href="#s" x="1471" y="358.3"/><use href="#s" x="1473.7" y="396"/>
<use href="#s" x="1563" y="311.3"/><use href="#s" x="1544.3" y="336.3"/><use href="#s" x="1528.3" y="360"/><use href="#s" x="1511" y="383.3"/><use href="#s" x="1492.3" y="408.3"/>
<use href="#s" x="1743.7" y="433.3"/><use href="#s" x="1684.3" y="433.3"/><use href="#s" x="1632.3" y="433.3"/><use href="#s" x="1583.3" y="433.3"/><use href="#s" x="1528.3" y="433.3"/>
<use href="#s" x="1402.7" y="433.3"/><use href="#s" x="1417" y="433.3"/><use href="#s" x="1432" y="433.3"/><use href="#s" x="1446.7" y="433.3"/><use href="#s" x="1461" y="433.3"/>
<use href="#s" x="1482.3" y="555.3"/><use href="#s" x="1481" y="530.7"/><use href="#s" x="1479.3" y="505.7"/><use href="#s" x="1477.7" y="483.7"/><use href="#s" x="1476.3" y="458.7"/>
<use href="#s" x="1341.9" y="621.6"/><use href="#s" x="1370.7" y="580.6"/><use href="#s" x="1395.7" y="544.3"/><use href="#s" x="1421.7" y="508.7"/><use href="#s" x="1449" y="471"/>
</g>
<rect x="1467.5" y="425" width="15.5" height="16.6" fill="#f2f4ff" stroke="#111" stroke-width="1.6"/>
<g class="p">
<circle cx="1461.7" cy="236.3" r="4.6" fill="#0d930f"/><circle cx="1463.3" cy="267.7" r="4.6" fill="#4fae55"/><circle cx="1463.3" cy="301.7" r="4.6" fill="#62ad66"/><circle cx="1464.7" cy="341.3" r="4.6" fill="#80b483"/><circle cx="1464.7" cy="383.3" r="4.6" fill="#9bb39b"/>
<circle cx="1552.7" cy="297.3" r="4.6" fill="#c8c400"/><circle cx="1538.3" cy="319.3" r="4.6" fill="#c4c450"/><circle cx="1524" cy="342.7" r="4.6" fill="#b8b870"/><circle cx="1505" cy="369.3" r="4.6" fill="#b5b58a"/><circle cx="1486.3" cy="399" r="4.6" fill="#aeae96"/>
<circle cx="1738" cy="425.7" r="4.6" fill="#900000"/><circle cx="1697.3" cy="425.7" r="4.6" fill="#b23a3a"/><circle cx="1641" cy="425.7" r="4.6" fill="#b44e50"/><circle cx="1589" cy="427.3" r="4.6" fill="#b55f5f"/><circle cx="1525.7" cy="429" r="4.6" fill="#b38a8a"/>
<circle cx="1399.7" cy="432" r="4.6" fill="#00b4b4"/><circle cx="1411.3" cy="432" r="4.6" fill="#40aab0"/><circle cx="1422.7" cy="432" r="4.6" fill="#70b5bb"/><circle cx="1436" cy="430.3" r="4.6" fill="#8db5b5"/><circle cx="1450" cy="430.3" r="4.6" fill="#a0b5b5"/><circle cx="1461.7" cy="433.3" r="4.6" fill="#fff"/>
<circle cx="1469.3" cy="555.3" r="4.6" fill="#b000a0"/><circle cx="1467.7" cy="535.3" r="4.6" fill="#b83aa8"/><circle cx="1467.7" cy="512" r="4.6" fill="#b860a8"/><circle cx="1467.7" cy="488.3" r="4.6" fill="#b580b0"/><circle cx="1466" cy="460" r="4.6" fill="#b8a0b8"/>
<circle cx="1341.9" cy="619" r="4.6" fill="#000090"/><circle cx="1360.7" cy="588.7" r="4.6" fill="#4a4ab5"/><circle cx="1384" cy="555.3" r="4.6" fill="#6060a8"/><circle cx="1407.3" cy="519.7" r="4.6" fill="#8080b5"/><circle cx="1436" cy="477.3" r="4.6" fill="#9aa0b5"/>
</g>
</svg>
</div>

<script>
(function(){
var Z3=[383,1453,330,1412,298,1370,265,1300,225,1205,190,1100,160,990,135,880,115,770,100,650,91,540,88,430,91,330,103,240,125,170,160,120,215,100];
var R=[.1142,.8262,.1547,.8059,.1929,.7816,.2296,.7543,.2658,.7243,.3016,.6923,.3373,.6589,.3731,.6245,.4087,.5896,.4441,.5547,.4788,.5202,.5125,.4866,.5448,.4544,.5752,.4242,.6029,.3965,.627,.3725,.6482,.3514,.6658,.334,.6801,.3197,.6915,.3083,.7079,.292,.719,.2809,.7347,.2653];
var pts=[],i;
for(i=0;i<Z3.length;i+=2)pts.push([Z3[i]/2.119-40,Z3[i+1]/2.34-38]);
for(i=0;i<R.length;i+=2)pts.push([R[i]*819,664-R[i+1]*696-78]);
function col(x,y,o,d,i){
 if(y<.001)y=.001;
 var X=x/y,Z=(1-x-y)/y;
 var r=3.2406*X-1.5372-.4986*Z,g=-.9689*X+1.8758+.0415*Z,b=.0557*X-.204+1.057*Z;
 var k=(r>=0&&g>=0&&b>=0)?255:153;
 r=Math.max(r,0);g=Math.max(g,0);b=Math.max(b,0);
 var m=Math.max(r,g,b)||1;
 d[i]=r/m*k;d[i+1]=g/m*k;d[i+2]=b/m*k;d[i+3]=255;
}
var c=document.getElementById('cie'),w=c.width,h=c.height;
var off=document.createElement('canvas');off.width=w;off.height=h;
var oc=off.getContext('2d'),im=oc.createImageData(w,h),p,q;i=0;
for(q=0;q<h;q++)for(p=0;p<w;p++){col((p+.5)/819,(664-(78+q+.5))/696,0,im.data,i);i+=4;}
oc.putImageData(im,0,0);
var ctx=c.getContext('2d');ctx.beginPath();
ctx.moveTo(pts[0][0],pts[0][1]);
for(i=1;i<pts.length-1;i++){ctx.quadraticCurveTo(pts[i][0],pts[i][1],(pts[i][0]+pts[i+1][0])/2,(pts[i][1]+pts[i+1][1])/2);}
ctx.lineTo(pts[pts.length-1][0],pts[pts.length-1][1]);
ctx.closePath();ctx.clip();ctx.drawImage(off,0,0);
var n=document.getElementById('ins'),nw=n.width,nh=n.height,nc=n.getContext('2d'),ni=nc.createImageData(nw,nh);
i=0;
for(q=0;q<nh;q++)for(p=0;p<nw;p++){col(.4193+(1714+p+.5-1810)/3833,.5053-(81+q+.5-185)/4098,0,ni.data,i);i+=4;}
nc.putImageData(ni,0,0);
})();
</script>
</body></html>
